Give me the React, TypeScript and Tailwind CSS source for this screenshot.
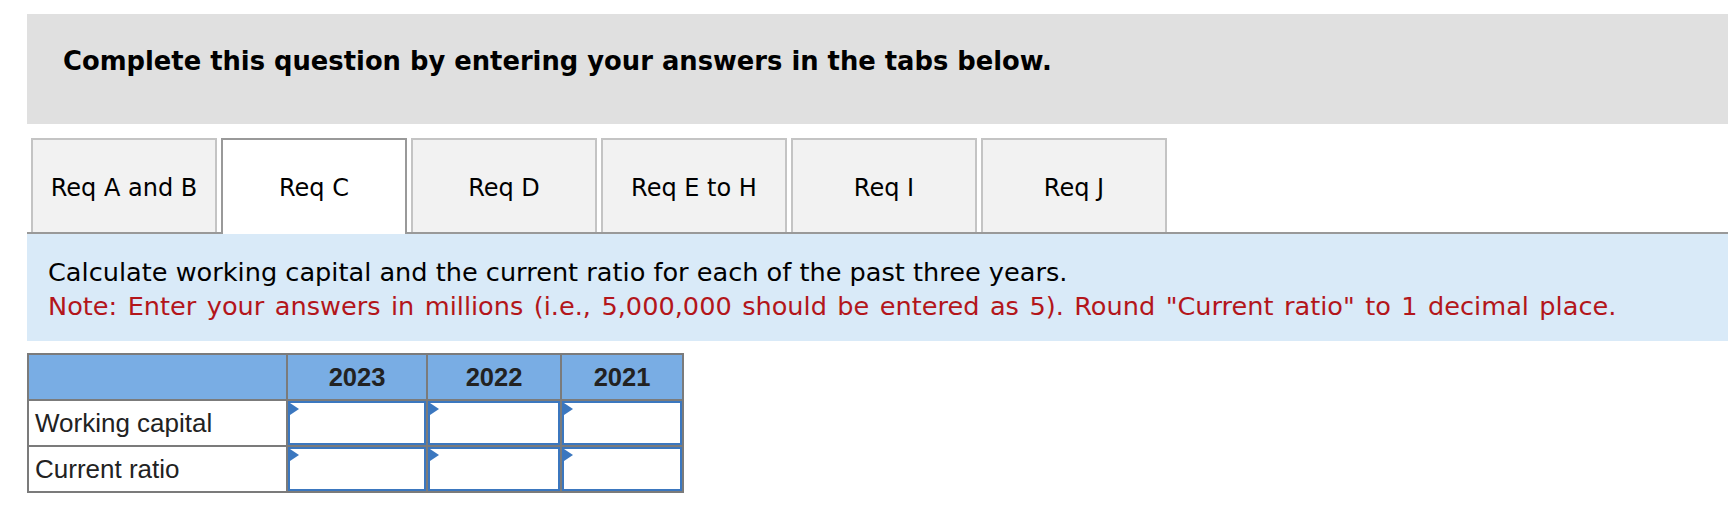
import React from 'react';

const TABS = ['Req A and B', 'Req C', 'Req D', 'Req E to H', 'Req I', 'Req J'];
const ACTIVE_TAB = 1;
const YEARS = ['2023', '2022', '2021'];
const ROWS = ['Working capital', 'Current ratio'];

const verdana = "font-['Verdana','DejaVu_Sans',sans-serif]";
const arial = "font-['Arial','Liberation_Sans',sans-serif]";

// blue input box with the little flag in the corner
const AnswerCell: React.FC = () => (
  <div className="relative bg-white border-2 border-[#3b77bf]">
    <svg
      className="absolute left-0 top-0"
      width="9"
      height="12"
      viewBox="0 0 9 12"
    >
      <path d="M0 0 L9 6 L0 12 Z" fill="#3b77bf" />
    </svg>
  </div>
);

export default function App() {
  return (
    <div className="bg-white w-full min-h-[511px] pt-[14px] pl-[27px] pr-[8px]">
      {/* Instruction header */}
      <div className={`bg-[#e0e0e0] h-[110px] pt-[30px] pl-[36px] ${verdana}`}>
        <p className="text-[25.8px] leading-[34px] font-bold text-black">
          Complete this question by entering your answers in the tabs below.
        </p>
      </div>

      {/* Tabs */}
      <div className="mt-[14px] flex gap-[4px] pl-[4px] border-b-2 border-[#999999]">
        {TABS.map((tab, i) => {
          const active = i === ACTIVE_TAB;
          return (
            <div
              key={tab}
              className={`w-[186px] pt-[3px] flex items-center justify-center border-2 border-b-0 text-[24px] text-black ${verdana} ${
                active
                  ? 'bg-white border-[#999999] h-[96px] pb-[2px] -mb-[2px] relative z-10'
                  : 'bg-[#f2f2f2] border-[#c4c4c4] h-[94px]'
              }`}
            >
              {tab}
            </div>
          );
        })}
      </div>

      {/* Question text */}
      <div className={`bg-[#d9eaf8] pt-[21px] pb-[18px] pl-[21px] text-[25.6px] leading-[34px] ${verdana}`}>
        <p className="text-black">
          Calculate working capital and the current ratio for each of the past three years.
        </p>
        <p className="text-[#b3161b] [word-spacing:2.3px]">
          Note: Enter your answers in millions (i.e., 5,000,000 should be entered as 5). Round &quot;Current ratio&quot; to 1 decimal place.
        </p>
      </div>

      {/* Answer table */}
      <div
        className={`mt-[12px] w-[657px] grid grid-cols-[257px_138px_132px_120px] grid-rows-[44px_44px_44px] gap-[2px] p-[2px] bg-[#7b7b7b] ${arial}`}
      >
        <div className="bg-[#79ade4]" />
        {YEARS.map((y) => (
          <div
            key={y}
            className="bg-[#79ade4] flex items-center justify-center text-[25.5px] font-bold text-[#222222]"
          >
            {y}
          </div>
        ))}
        {ROWS.map((row) => (
          <React.Fragment key={row}>
            <div className="bg-white flex items-center pl-[6px] text-[26px] text-[#222222]">
              {row}
            </div>
            {YEARS.map((y) => (
              <AnswerCell key={y} />
            ))}
          </React.Fragment>
        ))}
      </div>
    </div>
  );
}
